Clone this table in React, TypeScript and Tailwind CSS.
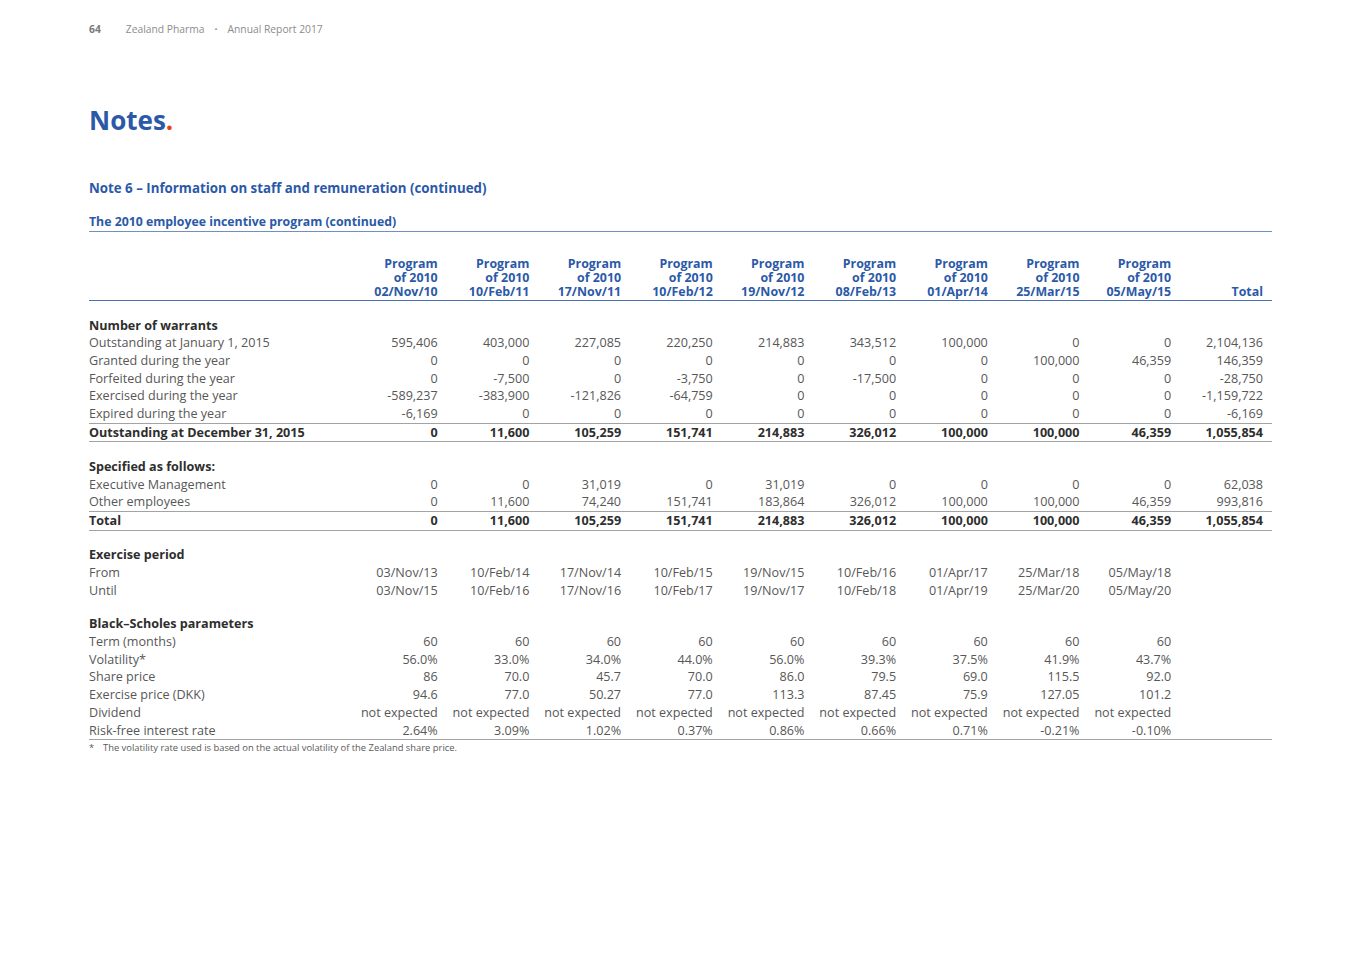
import React from "react";

const cols = [
  "02/Nov/10",
  "10/Feb/11",
  "17/Nov/11",
  "10/Feb/12",
  "19/Nov/12",
  "08/Feb/13",
  "01/Apr/14",
  "25/Mar/15",
  "05/May/15",
];

type Row = { label: string; values: string[]; bold?: boolean; rule?: "both" | "bottom" };
type Section = { title: string; rows: Row[] };

const ne = "not expected";

const sections: Section[] = [
  {
    title: "Number of warrants",
    rows: [
      { label: "Outstanding at January 1, 2015", values: ["595,406", "403,000", "227,085", "220,250", "214,883", "343,512", "100,000", "0", "0", "2,104,136"] },
      { label: "Granted during the year", values: ["0", "0", "0", "0", "0", "0", "0", "100,000", "46,359", "146,359"] },
      { label: "Forfeited during the year", values: ["0", "-7,500", "0", "-3,750", "0", "-17,500", "0", "0", "0", "-28,750"] },
      { label: "Exercised during the year", values: ["-589,237", "-383,900", "-121,826", "-64,759", "0", "0", "0", "0", "0", "-1,159,722"] },
      { label: "Expired during the year", values: ["-6,169", "0", "0", "0", "0", "0", "0", "0", "0", "-6,169"] },
      { label: "Outstanding at December 31, 2015", values: ["0", "11,600", "105,259", "151,741", "214,883", "326,012", "100,000", "100,000", "46,359", "1,055,854"], bold: true, rule: "both" },
    ],
  },
  {
    title: "Specified as follows:",
    rows: [
      { label: "Executive Management", values: ["0", "0", "31,019", "0", "31,019", "0", "0", "0", "0", "62,038"] },
      { label: "Other employees", values: ["0", "11,600", "74,240", "151,741", "183,864", "326,012", "100,000", "100,000", "46,359", "993,816"] },
      { label: "Total", values: ["0", "11,600", "105,259", "151,741", "214,883", "326,012", "100,000", "100,000", "46,359", "1,055,854"], bold: true, rule: "both" },
    ],
  },
  {
    title: "Exercise period",
    rows: [
      { label: "From", values: ["03/Nov/13", "10/Feb/14", "17/Nov/14", "10/Feb/15", "19/Nov/15", "10/Feb/16", "01/Apr/17", "25/Mar/18", "05/May/18", ""] },
      { label: "Until", values: ["03/Nov/15", "10/Feb/16", "17/Nov/16", "10/Feb/17", "19/Nov/17", "10/Feb/18", "01/Apr/19", "25/Mar/20", "05/May/20", ""] },
    ],
  },
  {
    title: "Black–Scholes parameters",
    rows: [
      { label: "Term (months)", values: ["60", "60", "60", "60", "60", "60", "60", "60", "60", ""] },
      { label: "Volatility*", values: ["56.0%", "33.0%", "34.0%", "44.0%", "56.0%", "39.3%", "37.5%", "41.9%", "43.7%", ""] },
      { label: "Share price", values: ["86", "70.0", "45.7", "70.0", "86.0", "79.5", "69.0", "115.5", "92.0", ""] },
      { label: "Exercise price (DKK)", values: ["94.6", "77.0", "50.27", "77.0", "113.3", "87.45", "75.9", "127.05", "101.2", ""] },
      { label: "Dividend", values: [ne, ne, ne, ne, ne, ne, ne, ne, ne, ""] },
      { label: "Risk-free interest rate", values: ["2.64%", "3.09%", "1.02%", "0.37%", "0.86%", "0.66%", "0.71%", "-0.21%", "-0.10%", ""], rule: "bottom" },
    ],
  },
];

function DataRow({ row }: { row: Row }) {
  const rule =
    row.rule === "both"
      ? "border-t border-b border-[#a3a3a3]"
      : row.rule === "bottom"
        ? "border-b border-[#a3a3a3]"
        : "";
  const txt = row.bold ? "font-bold text-[#2e2e2e]" : "text-[#575757]";
  return (
    <tr className={rule}>
      <td className={`p-0 leading-[17.7px] whitespace-nowrap ${txt}`}>{row.label}</td>
      {row.values.map((v, i) => (
        <td key={i} className={`p-0 pr-[9px] text-right leading-[17.7px] whitespace-nowrap ${txt}`}>
          {v}
        </td>
      ))}
    </tr>
  );
}

export default function App() {
  return (
    <div className="w-[1360px] min-h-[960px] bg-white pl-[89px] pt-[23px] font-['Open_Sans',sans-serif]">
      <div className="flex items-center text-[10.3px] leading-[12px] text-[#8c8c8c]">
        <span className="font-bold text-[#7a7a7a]">64</span>
        <span className="ml-[25px]">Zealand Pharma</span>
        <span className="mx-[10px] text-[8px]">•</span>
        <span>Annual Report 2017</span>
      </div>

      <h1 className="mt-[69px] text-[26px] leading-[32px] font-bold text-[#2b59a8]">
        Notes<span className="text-[#e5431d]">.</span>
      </h1>

      <h2 className="mt-[44px] text-[13.3px] leading-[16px] font-bold text-[#2b59a8]">
        Note 6 – Information on staff and remuneration (continued)
      </h2>

      <div className="mt-[18px] w-[1183px] border-b border-[#6f8fc6] pb-[1px]">
        <h3 className="text-[12.3px] leading-[16px] font-bold text-[#2b59a8]">
          The 2010 employee incentive program (continued)
        </h3>
      </div>

      <table className="mt-[25px] w-[1183px] table-fixed border-collapse text-[12.6px]">
        <colgroup>
          <col className="w-[266px]" />
          {Array.from({ length: 10 }).map((_, i) => (
            <col key={i} className="w-[91.7px]" />
          ))}
        </colgroup>
        <thead>
          <tr className="border-b border-[#4a70b5]">
            <th className="p-0" />
            {cols.map((c) => (
              <th key={c} className="p-0 pr-[9px] pb-[1px] text-right align-bottom text-[12.4px] leading-[14px] font-bold text-[#2b59a8]">
                Program
                <br />
                of 2010
                <br />
                {c}
              </th>
            ))}
            <th className="p-0 pr-[9px] pb-[1px] text-right align-bottom text-[12.4px] leading-[14px] font-bold text-[#2b59a8]">
              Total
            </th>
          </tr>
        </thead>
        <tbody>
          {sections.map((s) => (
            <React.Fragment key={s.title}>
              <tr>
                <td colSpan={11} className="h-[16px] p-0" />
              </tr>
              <tr>
                <td colSpan={11} className="p-0 leading-[17.7px] font-bold text-[#2e2e2e]">
                  {s.title}
                </td>
              </tr>
              {s.rows.map((r) => (
                <DataRow key={r.label} row={r} />
              ))}
            </React.Fragment>
          ))}
        </tbody>
      </table>

      <p className="mt-[2px] flex text-[9.4px] leading-[12px] text-[#5a5a5a]">
        <span className="w-[14px]">*</span>
        <span>The volatility rate used is based on the actual volatility of the Zealand share price.</span>
      </p>
    </div>
  );
}
